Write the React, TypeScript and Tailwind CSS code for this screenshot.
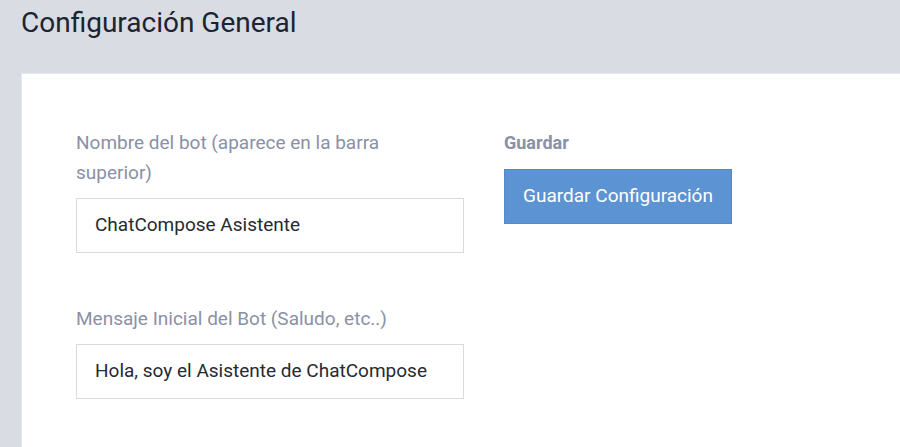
export default function App() {
  return (
    <div className="min-h-[447px] w-[900px] bg-[#d9dde3] font-['Roboto',sans-serif]">
      <div className="h-[73px] pl-[21px] pt-[6px]">
        <h1 className="text-[28px] leading-[34px] text-[#1c2331]">Configuración General</h1>
      </div>
      <div className="ml-[21px] min-h-[374px] border-t border-l border-[#e4e7eb] bg-white pl-[54px] pt-[54px]">
        <div className="flex gap-[40px]">
          <div className="flex w-[388px] flex-col">
            <label className="max-w-[340px] text-[19px] leading-[30px] text-[#8a90a6]">
              Nombre del bot (aparece en la barra superior)
            </label>
            <div className="mt-[10px] flex h-[55px] items-center border border-[#dadada] px-[18px] text-[19px] text-[#252a33]">
              ChatCompose Asistente
            </div>
            <label className="mt-[51px] text-[19px] leading-[30px] text-[#8a90a6]">
              Mensaje Inicial del Bot (Saludo, etc..)
            </label>
            <div className="mt-[10px] flex h-[55px] items-center border border-[#dadada] px-[18px] text-[19px] text-[#252a33]">
              Hola, soy el Asistente de ChatCompose
            </div>
          </div>
          <div className="flex flex-col">
            <span className="mt-[3px] text-[18px] font-bold leading-[24px] text-[#8a90a6]">Guardar</span>
            <button className="mt-[14px] h-[55px] w-[228px] border border-[#4f8bcf] bg-[#5b93d3] text-[19px] text-white">
              Guardar Configuración
            </button>
          </div>
        </div>
      </div>
    </div>
  )
}
